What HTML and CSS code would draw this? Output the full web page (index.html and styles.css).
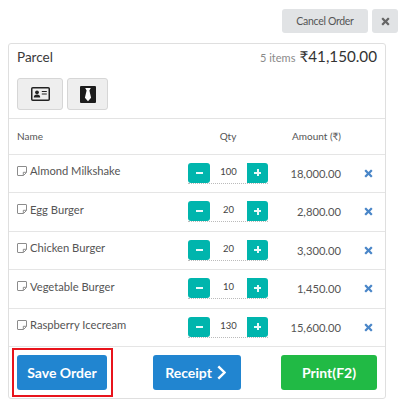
FILE: index.html
```
<!DOCTYPE html>
<html lang="en">
<head>
<meta charset="utf-8">
<title>Order</title>
<link rel="stylesheet" href="styles.css">
</head>
<body>
<svg class="defs" width="0" height="0" aria-hidden="true">
  <symbol id="i-x" viewBox="0 0 10 10"><path d="M2.600.8 5 3.200 7.400.8a.6.6 0 0 1 .8 0l1 1a.6.6 0 0 1 0 .8L6.800 5l2.400 2.400a.6.6 0 0 1 0 .8l-1 1a.6.6 0 0 1-.8 0L5 6.800 2.600 9.200a.6.6 0 0 1-.8 0l-1-1a.6.6 0 0 1 0-.8L3.200 5 .8 2.600a.6.6 0 0 1 0-.8l1-1a.6.6 0 0 1 .8 0z"/></symbol>
  <symbol id="i-note" viewBox="0 0 10 10"><path d="M1 .5h8a.5.5 0 0 1 .5.5v5.500L6.500 9.500H1a.5.5 0 0 1-.5-.5V1A.5.5 0 0 1 1 .5zM6.300 9.300V6.300h3" fill="none" stroke="currentColor" stroke-width="1"/></symbol>
</svg>

<div class="top-actions">
  <button class="btn-grey btn-cancel">Cancel Order</button>
  <button class="btn-grey btn-close"><svg class="close-icon"><use href="#i-x"/></svg></button>
</div>

<main class="card">
  <header class="card-head">
    <div class="head-line">
      <span class="title">Parcel</span>
      <span class="summary"><span class="count">5 items</span> <span class="total">₹41,150.00</span></span>
    </div>
    <div class="tools">
      <button class="tool tool-id">
        <svg width="19" height="14" viewBox="0 0 19 14"><rect x=".75" y=".75" width="17.500" height="12.500" rx="1" fill="none" stroke="#222" stroke-width="1.500"/><circle cx="6" cy="5.300" r="1.900" fill="#222"/><path d="M2.800 10.500c0-2 1.300-2.900 3.200-2.900s3.200.9 3.200 2.900z" fill="#222"/><path d="M10.800 4.500h5M10.800 7h5" stroke="#222" stroke-width="1.200"/></svg>
      </button>
      <button class="tool tool-tie">
        <svg width="16" height="17" viewBox="0 0 16 17"><rect width="16" height="17" rx="1" fill="#1c1c1c"/><path d="M5.200 2h5.600L9.400 4.600l1.700 7.200L8 15.200l-3.100-3.400 1.700-7.200z" fill="#fff"/></svg>
      </button>
    </div>
  </header>

  <div class="row row-head">
    <span class="col-name">Name</span>
    <span class="col-qty">Qty</span>
    <span class="col-amount">Amount (₹)</span>
  </div>

  <div class="row">
    <span class="col-name"><svg class="note"><use href="#i-note"/></svg>Almond Milkshake</span>
    <div class="col-qty stepper"><button class="step step-minus"><span class="minus-bar"></span></button><span class="qty">100</span><button class="step step-plus"><span class="plus-sign"></span></button></div>
    <span class="col-amount">18,000.00</span>
    <svg class="remove"><use href="#i-x"/></svg>
  </div>
  <div class="row">
    <span class="col-name"><svg class="note"><use href="#i-note"/></svg>Egg Burger</span>
    <div class="col-qty stepper"><button class="step step-minus"><span class="minus-bar"></span></button><span class="qty">20</span><button class="step step-plus"><span class="plus-sign"></span></button></div>
    <span class="col-amount">2,800.00</span>
    <svg class="remove"><use href="#i-x"/></svg>
  </div>
  <div class="row">
    <span class="col-name"><svg class="note"><use href="#i-note"/></svg>Chicken Burger</span>
    <div class="col-qty stepper"><button class="step step-minus"><span class="minus-bar"></span></button><span class="qty">20</span><button class="step step-plus"><span class="plus-sign"></span></button></div>
    <span class="col-amount">3,300.00</span>
    <svg class="remove"><use href="#i-x"/></svg>
  </div>
  <div class="row">
    <span class="col-name"><svg class="note"><use href="#i-note"/></svg>Vegetable Burger</span>
    <div class="col-qty stepper"><button class="step step-minus"><span class="minus-bar"></span></button><span class="qty">10</span><button class="step step-plus"><span class="plus-sign"></span></button></div>
    <span class="col-amount">1,450.00</span>
    <svg class="remove"><use href="#i-x"/></svg>
  </div>
  <div class="row">
    <span class="col-name"><svg class="note"><use href="#i-note"/></svg>Raspberry Icecream</span>
    <div class="col-qty stepper"><button class="step step-minus"><span class="minus-bar"></span></button><span class="qty">130</span><button class="step step-plus"><span class="plus-sign"></span></button></div>
    <span class="col-amount">15,600.00</span>
    <svg class="remove"><use href="#i-x"/></svg>
  </div>

  <footer class="card-foot">
    <div class="highlight"><button class="action action-save">Save Order</button></div>
    <button class="action action-receipt">Receipt <svg width="9" height="15" viewBox="0 0 9 15"><path d="M1.300 1.300 7.500 7.500l-6.200 6.200" fill="none" stroke="#fff" stroke-width="2.400"/></svg></button>
    <button class="action action-print">Print(F2)</button>
  </footer>
</main>
</body>
</html>
```

FILE: styles.css
```
* { box-sizing: border-box; }
html, body { margin: 0; padding: 0; background: #fff; }
body {
  width: 404px;
  height: 406px;
  overflow: hidden;
  font-family: Lato, "Noto Sans", sans-serif;
  color: #444;
  position: relative;
}
button { font-family: inherit; border: 0; padding: 0; cursor: pointer; }
.defs { position: absolute; }

.top-actions {
  display: flex;
  justify-content: flex-end;
  gap: 4px;
  height: 43px;
  padding: 9px 6px 0 0;
}
.btn-grey {
  height: 24px;
  background: #e1e3e5;
  border-radius: 3px;
  color: #555;
  font-size: 10.500px;
  letter-spacing: -0.3px;
  display: flex;
  align-items: center;
  justify-content: center;
}
.btn-cancel { width: 86px; }
.btn-close { width: 26px; }
.close-icon { width: 9px; height: 9px; fill: #666; }

.card {
  width: 378px;
  height: 356px;
  margin-left: 8px;
  border: 1px solid #dfdfdf;
  border-radius: 3px;
  display: flex;
  flex-direction: column;
}
.card-head {
  height: 75px;
  padding: 2px 8px 0 8px;
  border-bottom: 1px solid #e3e3e3;
}
.head-line {
  display: flex;
  justify-content: space-between;
  align-items: baseline;
  height: 24px;
}
.title { font-size: 13.500px; color: #3a3a3a; }
.count { font-size: 11px; color: #8a8a8a; }
.total { font-size: 15.200px; color: #333; }
.tools { display: flex; gap: 4px; margin-top: 8px; }
.tool {
  height: 32px;
  background: #eeeeee;
  border: 1px solid #d6d6d6;
  border-radius: 3px;
  display: flex;
  align-items: center;
  justify-content: center;
}
.tool-id { width: 46px; }
.tool-tie { width: 41px; }

.row {
  height: 38.500px;
  display: flex;
  align-items: center;
  border-bottom: 1px solid #e5e5e5;
  padding-left: 8px;
  font-size: 11.200px;
  color: #555;
  flex: none;
}
.row-head { height: 35.500px; font-size: 10px; color: #555; }
.col-name { width: 171px; display: flex; align-items: center; padding-bottom: 5px; }
.row-head .col-name { padding-bottom: 0; }
.note { width: 10px; height: 10px; margin-right: 3px; color: #8c8c8c; fill: none; flex: none; }
.col-qty { width: 80px; text-align: center; }
.col-amount { width: 73px; text-align: right; }

.stepper {
  display: flex;
  align-items: center;
  width: 80px;
  height: 21px;
  border-bottom: 1px dotted #bbb;
}
.step {
  height: 20px;
  background: #00b5ad;
  display: flex;
  align-items: center;
  justify-content: center;
  flex: none;
}
.step-minus { width: 22px; border-radius: 3px; }
.step-plus { width: 21px; border-radius: 0 3px 3px 0; }
.minus-bar { width: 7px; height: 2px; background: #eafafa; }
.plus-sign {
  width: 7px;
  height: 7px;
  background:
    linear-gradient(#eafafa, #eafafa) center / 7px 2px no-repeat,
    linear-gradient(#eafafa, #eafafa) center / 2px 7px no-repeat;
}
.qty { flex: 1; text-align: center; font-size: 9.500px; color: #444; padding-bottom: 3px; }
.remove { width: 9px; height: 9px; margin-left: 23px; fill: #4a86c8; flex: none; }

.card-foot {
  flex: 1;
  display: flex;
  align-items: flex-start;
  padding: 1px 8px 0 3px;
}
.highlight {
  width: 101px;
  height: 49px;
  border: 2px solid #e8141c;
  padding: 5px 4px 0 3px;
}
.action {
  height: 35px;
  border-radius: 3px;
  color: #fff;
  font-size: 14px;
  font-weight: 700;
  display: flex;
  align-items: center;
  justify-content: center;
  gap: 5px;
}
.action-save { width: 90px; background: #2185d0; }
.action-receipt { width: 88px; margin: 7px 0 0 40px; padding-right: 3px; background: #2185d0; }
.action-print { width: 96px; margin: 7px 0 0 40px; background: #21ba45; }
```
